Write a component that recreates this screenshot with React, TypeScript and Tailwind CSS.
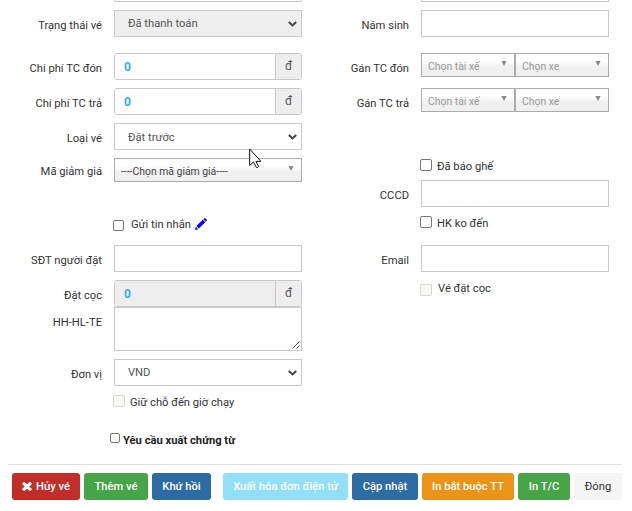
import React from 'react';

type Kids = { children?: React.ReactNode };

function Row({ label, className, lead = 'leading-[32px]', children }: Kids & { label?: string; className: string; lead?: string }) {
  return (
    <div className={`flex items-start gap-3 ${className}`}>
      <div className={`w-[102px] shrink-0 whitespace-nowrap text-right ${lead}`}>{label}</div>
      <div className="w-[188px] shrink-0">{children}</div>
    </div>
  );
}

function TextInput() {
  return <div className="h-[27px] border border-[#c8c8c8] bg-white" />;
}

function Select({ text, disabled, shift = '' }: { text: string; disabled?: boolean; shift?: string }) {
  return (
    <div
      className={`flex h-[27px] items-center justify-between border border-[#c8c8c8] pl-[13px] pr-[4px] leading-[25px] text-[#555] ${
        disabled ? 'bg-[#eee]' : 'bg-white'
      }`}
    >
      <span className={shift}>{text}</span>
      <svg width="9" height="6" viewBox="0 0 9 6" fill="none" stroke="#444" strokeWidth="2.1">
        <path d="M.8 1 4.5 4.4 8.2 1" />
      </svg>
    </div>
  );
}

function Money({ disabled }: { disabled?: boolean }) {
  return (
    <div className="flex h-[27px] overflow-hidden rounded-[3px] border border-[#c8c8c8] leading-[25px]">
      <div className={`flex-1 pl-[9px] text-[12px] font-bold leading-[27px] text-[#34afe4] ${disabled ? 'bg-[#eee]' : 'bg-white'}`}>0</div>
      <div className="w-[26px] border-l border-[#c8c8c8] bg-[#eee] text-center text-[12px] text-[#555]">đ</div>
    </div>
  );
}

function Chosen({ text, className }: { text: string; className: string }) {
  return (
    <div
      className={`flex h-6 items-start justify-between border border-[#aaa] bg-linear-to-b from-white from-30% to-[#f0f0f0] to-60% pl-[6px] pr-[7px] leading-[25px] ${className}`}
    >
      <span>{text}</span>
      <svg className="mt-[7px]" width="6" height="5" viewBox="0 0 6 5" fill="#888">
        <path d="M.4 0h5.2L3 5z" />
      </svg>
    </div>
  );
}

function Check({ text, disabled, className, box = 'size-3' }: { text: React.ReactNode; disabled?: boolean; className: string; box?: string }) {
  return (
    <div className={`flex items-start whitespace-nowrap leading-[16px] ${className}`}>
      <span
        className={`shrink-0 rounded-[2px] border ${box} ${disabled ? 'border-[#d6d6d2] bg-[#f8f8f5]' : 'border-[#777] bg-white'}`}
      />
      {text}
    </div>
  );
}

function Button({ children, className }: Kids & { className: string }) {
  return (
    <button className={`flex h-[27px] shrink-0 items-center justify-center whitespace-nowrap rounded-[3px] leading-[26px] ${className}`}>
      {children}
    </button>
  );
}

export default function App() {
  return (
    <div className="h-[511px] w-[632px] overflow-hidden bg-white font-[Roboto,sans-serif] text-[11.2px] text-[#333]">
      <div className="flex h-[464px] gap-[5px]">
        <div className="w-[302px]">
          <div className="ml-[114px] h-[2px] border-x border-b border-[#c8c8c8]" />
          <Row label="Trạng thái vé" className="mt-2 h-[27px]"><Select text="Đã thanh toán" disabled /></Row>
          <Row label="Chi phí TC đón" className="mt-4 h-[27px]"><Money /></Row>
          <Row label="Chi phí TC trả" className="mt-2 h-[27px]"><Money /></Row>
          <Row label="Loại vé" className="mt-2 h-[27px]">
            <div className="relative">
              <Select text="Đặt trước" shift="pt-[2px]" />
              <svg className="absolute left-[135px] top-[25px]" width="13" height="21" viewBox="0 0 13 21" fill="white" stroke="#111" strokeWidth="1">
                <path d="M.7 1v16.5l3.7-3.6 3 5.6q1.6.5 2.3-1l-2.8-5.1h5z" />
              </svg>
            </div>
          </Row>
          <Row label="Mã giảm giá" lead="leading-[28px]" className="mt-2 h-6"><Chosen text="----Chọn mã giảm giá----" className="text-[10.4px] text-[#444]" /></Row>
          <Check
            className="ml-[113px] mt-[38px] h-[12px]"
            box="size-[11px]"
            text={
              <span className="-mt-[3px] ml-[7px] flex">
                Gửi tin nhắn
                <svg className="ml-[4px] mt-px" width="12" height="12" viewBox="0 0 12 12" fill="#00f">
                  <path d="M0 12 .8 8.7 3.3 11.2zM1.4 8.1 7.7 1.8l2.5 2.5-6.3 6.3zM8.3 1.2 9.1.4q.7-.7 1.4 0l1.1 1.1q.7.7 0 1.4l-.8.8z" />
                </svg>
              </span>
            }
          />
          <Row label="SĐT người đặt" className="mt-[13px] h-[27px]"><TextInput /></Row>
          <Row label="Đặt cọc" className="mt-2 h-[27px]"><Money disabled /></Row>
          <Row label="HH-HL-TE" className="h-[44px]">
            <div className="flex h-[44px] items-end justify-end border border-[#c8c8c8] p-px">
              <svg width="8" height="8" viewBox="0 0 8 8" stroke="#555" strokeWidth="1">
                <path d="M.5 7.5l7-7M4.5 7.5l3-3" />
              </svg>
            </div>
          </Row>
          <Row label="Đơn vị" className="mt-2 h-[27px]"><Select text="VND" /></Row>
          <Check className="ml-[113px] mt-[9px] h-[12px]" disabled text={<span className="ml-[5px]">Giữ chỗ đến giờ chạy</span>} />
          <Check
            className="ml-[110px] mt-[26px] h-[10px]"
            box="size-[10px]"
            text={<span className="ml-[3px] font-bold text-[#222]">Yêu cầu xuất chứng từ</span>}
          />
        </div>
        <div className="w-[302px]">
          <div className="ml-[114px] h-[2px] border-x border-b border-[#c8c8c8]" />
          <Row label="Năm sinh" className="mt-2 h-[27px]"><TextInput /></Row>
          <Row label="Gán TC đón" className="mt-4 h-6">
            <div className="grid grid-cols-2 text-[10.4px] text-[#999]">
              <Chosen text="Chọn tài xế" className="" />
              <Chosen text="Chọn xe" className="" />
            </div>
          </Row>
          <Row label="Gán TC trả" className="mt-[11px] h-6">
            <div className="grid grid-cols-2 text-[10.4px] text-[#999]">
              <Chosen text="Chọn tài xế" className="" />
              <Chosen text="Chọn xe" className="" />
            </div>
          </Row>
          <Check className="ml-[113px] mt-[47px] h-[12px]" text={<span className="ml-[5px]">Đã báo ghế</span>} />
          <Row label="CCCD" className="mt-[9px] h-[27px]"><TextInput /></Row>
          <Check className="ml-[113px] mt-[9px] h-[12px]" text={<span className="ml-[5px]">HK ko đến</span>} />
          <Row label="Email" className="mt-[17px] h-[27px]"><TextInput /></Row>
          <Check className="ml-[113px] mt-[12px] h-[12px]" disabled text={<span className="-mt-[3px] ml-[6px]">Vé đặt cọc</span>} />
        </div>
      </div>
      <div className="ml-2 w-[614px] border-t border-[#ddd]" />
      <div className="ml-3 mt-2 flex gap-1 font-medium text-white">
        <Button className="w-[68px] gap-[4px] bg-[#c12e2a]">
          <svg width="10" height="9" viewBox="0 0 10 9" stroke="white" strokeWidth="3.2">
            <path d="M1 .8l8 7.4M9 .8L1 8.2" />
          </svg>
          Hủy vé
        </Button>
        <Button className="w-16 bg-[#46a546]">Thêm vé</Button>
        <Button className="w-[59px] bg-[#2d6ca2]">Khứ hồi</Button>
        <Button className="ml-2 w-[125px] bg-[#92dff8]">Xuất hóa đơn điện tử</Button>
        <Button className="w-[66px] bg-[#2d6ca2]">Cập nhật</Button>
        <Button className="w-[92px] bg-[#eb9316]">In bắt buộc TT</Button>
        <Button className="w-[52px] bg-[#46a546]">In T/C</Button>
        <Button className="w-12 bg-[#f5f5f6] font-normal text-[#333]">Đóng</Button>
      </div>
    </div>
  );
}
